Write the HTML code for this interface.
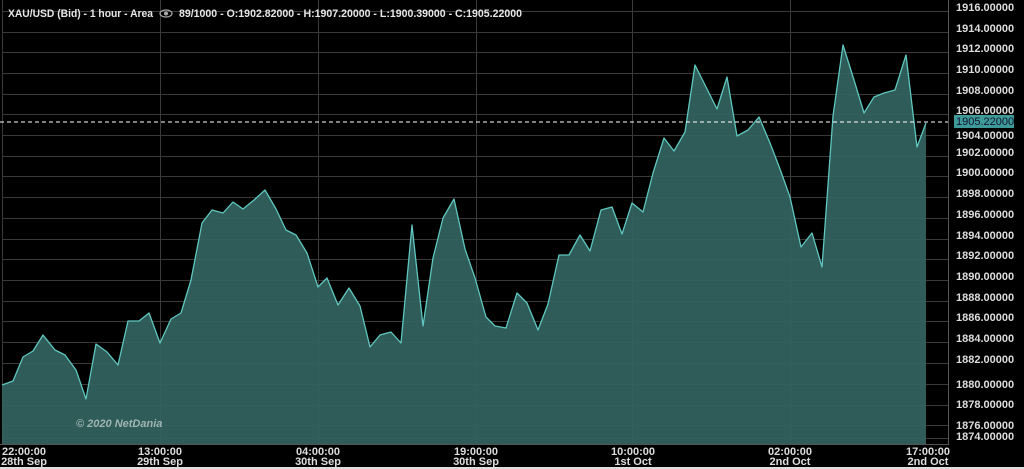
<!DOCTYPE html>
<html><head><meta charset="utf-8"><style>
html,body{margin:0;padding:0;background:#000;}
svg{display:block;}
text{font-family:"Liberation Sans",Arial,sans-serif;}
</style></head><body>
<svg width="1024" height="469" viewBox="0 0 1024 469" xmlns="http://www.w3.org/2000/svg">
<rect width="1024" height="469" fill="#000"/>
<g stroke="#3a3a3a" stroke-width="1">
<line x1="2" y1="11.5" x2="948" y2="11.5"/><line x1="2" y1="32.5" x2="948" y2="32.5"/><line x1="2" y1="52.5" x2="948" y2="52.5"/><line x1="2" y1="73.5" x2="948" y2="73.5"/><line x1="2" y1="94.5" x2="948" y2="94.5"/><line x1="2" y1="114.5" x2="948" y2="114.5"/><line x1="2" y1="135.5" x2="948" y2="135.5"/><line x1="2" y1="156.5" x2="948" y2="156.5"/><line x1="2" y1="176.5" x2="948" y2="176.5"/><line x1="2" y1="197.5" x2="948" y2="197.5"/><line x1="2" y1="218.5" x2="948" y2="218.5"/><line x1="2" y1="239.5" x2="948" y2="239.5"/><line x1="2" y1="259.5" x2="948" y2="259.5"/><line x1="2" y1="280.5" x2="948" y2="280.5"/><line x1="2" y1="301.5" x2="948" y2="301.5"/><line x1="2" y1="321.5" x2="948" y2="321.5"/><line x1="2" y1="342.5" x2="948" y2="342.5"/><line x1="2" y1="363.5" x2="948" y2="363.5"/><line x1="2" y1="384.5" x2="948" y2="384.5"/><line x1="2" y1="405.5" x2="948" y2="405.5"/><line x1="2" y1="425.5" x2="948" y2="425.5"/><line x1="2" y1="438.5" x2="948" y2="438.5"/>
<line x1="2.5" y1="0" x2="2.5" y2="444"/><line x1="160.5" y1="0" x2="160.5" y2="444"/><line x1="318.5" y1="0" x2="318.5" y2="444"/><line x1="476.5" y1="0" x2="476.5" y2="444"/><line x1="632.5" y1="0" x2="632.5" y2="444"/><line x1="790.5" y1="0" x2="790.5" y2="444"/>
</g>
<polygon fill="#33635f" fill-opacity="0.92" points="2,444 2,385 13,381 23,357 33,351 43,335 55,350 65,355 76,370 86,399 96,344 107,352 118,365 128,321 139,321 149,313 160,343 171,319 181,313 191,280 202,223 212,210 223,213 233,202 243,209 254,200 265,190 276,209 286,230 296,235 307,253 318,287 327,278 338,305 349,288 360,306 370,347 380,335 391,332 401,343 412,225 423,326 433,258 443,218 454,199 465,249 475,278 486,317 495,326 506,328 517,293 527,303 538,330 548,304 559,255 569,255 580,235 590,251 601,210 612,207 622,234 632,203 643,212 653,173 664,138 674,151 685,132 695,65 706,87 717,109 727,77 737,136 748,130 759,117 770,143 780,169 790,197 801,247 812,233 822,267 833,116 843,45 854,80 864,113 874,97 884,93 895,90 906,55 917,147 926,123 926,444"/>
<polyline fill="none" stroke="#5fc7bf" stroke-width="1.3" stroke-linejoin="round" points="2,385 13,381 23,357 33,351 43,335 55,350 65,355 76,370 86,399 96,344 107,352 118,365 128,321 139,321 149,313 160,343 171,319 181,313 191,280 202,223 212,210 223,213 233,202 243,209 254,200 265,190 276,209 286,230 296,235 307,253 318,287 327,278 338,305 349,288 360,306 370,347 380,335 391,332 401,343 412,225 423,326 433,258 443,218 454,199 465,249 475,278 486,317 495,326 506,328 517,293 527,303 538,330 548,304 559,255 569,255 580,235 590,251 601,210 612,207 622,234 632,203 643,212 653,173 664,138 674,151 685,132 695,65 706,87 717,109 727,77 737,136 748,130 759,117 770,143 780,169 790,197 801,247 812,233 822,267 833,116 843,45 854,80 864,113 874,97 884,93 895,90 906,55 917,147 926,123"/>
<line x1="0" y1="122" x2="952" y2="122" stroke="#fff" stroke-width="1" stroke-dasharray="4,3"/>
<line x1="948.5" y1="0" x2="948.5" y2="445" stroke="#555"/>
<line x1="0" y1="444.5" x2="948" y2="444.5" stroke="#555"/>
<g fill="#ddd" font-size="11" font-weight="bold">
<text x="956" y="11">1916.00000</text><text x="956" y="32">1914.00000</text><text x="956" y="52">1912.00000</text><text x="956" y="73">1910.00000</text><text x="956" y="94">1908.00000</text><text x="956" y="114">1906.00000</text><text x="956" y="156">1902.00000</text><text x="956" y="176">1900.00000</text><text x="956" y="197">1898.00000</text><text x="956" y="218">1896.00000</text><text x="956" y="239">1894.00000</text><text x="956" y="259">1892.00000</text><text x="956" y="280">1890.00000</text><text x="956" y="301">1888.00000</text><text x="956" y="321">1886.00000</text><text x="956" y="342">1884.00000</text><text x="956" y="363">1882.00000</text><text x="956" y="388">1880.00000</text><text x="956" y="408">1878.00000</text><text x="956" y="429">1876.00000</text><text x="956" y="440">1874.00000</text>
<text x="956" y="139">1904.00000</text>
</g>
<rect x="954" y="115" width="60" height="13" fill="#3e9a96"/>
<text x="956" y="125" font-size="11" fill="#113">1905.22000</text>
<g fill="#ddd" font-size="11" font-weight="bold" text-anchor="middle">
<text x="24" y="455">22:00:00</text><text x="24" y="465">28th Sep</text>
<text x="160" y="455">13:00:00</text><text x="160" y="465">29th Sep</text>
<text x="318" y="455">04:00:00</text><text x="318" y="465">30th Sep</text>
<text x="476" y="455">19:00:00</text><text x="476" y="465">30th Sep</text>
<text x="633" y="455">10:00:00</text><text x="633" y="465">1st Oct</text>
<text x="790" y="455">02:00:00</text><text x="790" y="465">2nd Oct</text>
<text x="928" y="455">17:00:00</text><text x="928" y="465">2nd Oct</text>
</g>
<rect x="0" y="467" width="1024" height="2" fill="#ddd"/>
<text x="76" y="427" font-size="11" font-weight="bold" font-style="italic" fill="#9fb5b2">© 2020 NetDania</text>
<g fill="#e6e6e6" font-size="11" font-weight="bold">
<text x="8" y="17" textLength="145" lengthAdjust="spacingAndGlyphs">XAU/USD (Bid) - 1 hour - Area</text>
<text x="179" y="17" textLength="343" lengthAdjust="spacingAndGlyphs">89/1000 - O:1902.82000 - H:1907.20000 - L:1900.39000 - C:1905.22000</text>
</g>
<ellipse cx="166" cy="13.5" rx="6" ry="3.5" fill="none" stroke="#aaa" stroke-width="1.2"/>
<circle cx="166" cy="13.5" r="2" fill="#aaa"/>
</svg>
</body></html>
